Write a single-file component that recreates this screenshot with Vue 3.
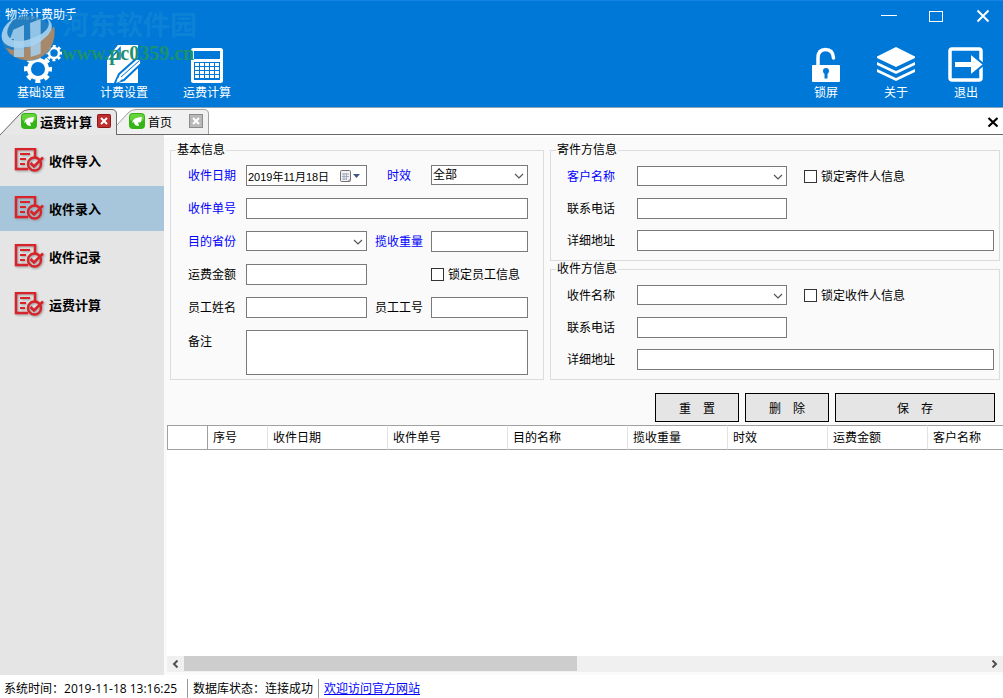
<script setup>
import { ref } from 'vue'

const navItems = ['收件导入', '收件录入', '收件记录', '运费计算']
const activeNav = ref(1)

const columns = [
  { name: '', width: 40 },
  { name: '序号', width: 60 },
  { name: '收件日期', width: 120 },
  { name: '收件单号', width: 120 },
  { name: '目的名称', width: 120 },
  { name: '揽收重量', width: 100 },
  { name: '时效', width: 100 },
  { name: '运费金额', width: 100 },
  { name: '客户名称', width: 120 },
]

const parties = [
  { id: 'sender', legend: '寄件方信息', name: '客户名称', required: true, lock: '锁定寄件人信息' },
  { id: 'receiver', legend: '收件方信息', name: '收件名称', required: false, lock: '锁定收件人信息' },
]

const keyCols = [4, 9, 14, 19, 24]
const keyRows = [15, 19, 23, 27]
</script>

<template>
  <div class="window">
    <header class="header">
      <div class="titlebar">
        <h1 class="title">物流计费助手</h1>
        <div class="controls">
          <button type="button" aria-label="最小化">
            <svg width="16" height="16" viewBox="0 0 16 16"><path d="M0 7.5H16" stroke="#fff" /></svg>
          </button>
          <button type="button" aria-label="最大化">
            <svg width="16" height="16" viewBox="0 0 16 16"><rect x="1.5" y="3.5" width="13" height="10" fill="none" stroke="#fff" /></svg>
          </button>
          <button type="button" aria-label="关闭">
            <svg width="16" height="16" viewBox="0 0 16 16"><path d="M2.500 2.500L13.500 13.500M13.500 2.500L2.500 13.500" stroke="#fff" stroke-width="2" /></svg>
          </button>
        </div>
      </div>

      <nav class="toolbar">
        <button type="button" class="tool">
          <svg width="42" height="38" viewBox="0 0 42 38" fill="none" stroke="#fff">
            <circle cx="18" cy="24" r="9" stroke-width="4" />
            <circle cx="18" cy="24" r="12" stroke-width="4" stroke-dasharray="5 4.425" stroke-dashoffset="2.500" />
            <circle cx="34" cy="8" r="5" stroke-width="2.500" />
            <circle cx="34" cy="8" r="7" stroke-width="2.500" stroke-dasharray="3 2.498" stroke-dashoffset="1.500" />
          </svg>
          <span>基础设置</span>
        </button>
        <button type="button" class="tool">
          <svg width="34" height="38" viewBox="0 0 34 38">
            <path d="M11 0H31V38H0V14Z" fill="#fff" />
            <path d="M3 14L13 3V14Z" fill="#fff" stroke="#0078d7" stroke-width="1.500" />
            <path d="M8 38L12 29L29 14Q35 13 34 19L17 35Z" fill="#fff" stroke="#0078d7" stroke-width="2" />
            <path d="M14 32L32 16" stroke="#0078d7" stroke-width="1" />
            <path d="M9 38L11 33L14 36Z" fill="#fff" />
          </svg>
          <span>计费设置</span>
        </button>
        <button type="button" class="tool">
          <svg width="32" height="38" viewBox="0 -3 32 38">
            <rect x="1.500" y="1.500" width="29" height="32" rx="1" fill="none" stroke="#fff" stroke-width="3" />
            <path d="M3 12.500H29" stroke="#fff" stroke-width="3" />
            <template v-for="y in keyRows" :key="y">
              <rect v-for="x in keyCols" :key="x" :x="x" :y="y" width="4" height="3" fill="#fff" />
            </template>
          </svg>
          <span>运费计算</span>
        </button>
        <div class="tool-spacer"></div>
        <button type="button" class="tool small">
          <svg width="30" height="38" viewBox="0 0 30 38">
            <path d="M7 21V13Q7 4.500 14.500 4.500Q22 4.500 22.500 13" fill="none" stroke="#fff" stroke-width="3.500" stroke-linecap="round" />
            <rect x="1" y="20" width="28" height="17" rx="1" fill="#fff" />
            <circle cx="15" cy="26" r="3" fill="#0078d7" />
            <path d="M13.500 27H16.500V33.500H13.500Z" fill="#0078d7" />
          </svg>
          <span>锁屏</span>
        </button>
        <button type="button" class="tool small">
          <svg width="38" height="38" viewBox="0 0 38 38" fill="#fff">
            <path d="M19 2L38 11.500V13L19 22L0 13V11.500Z" />
            <path d="M0 17L19 26L38 17V20L19 29L0 20Z" />
            <path d="M0 24L19 33L38 24V27L19 36L0 27Z" />
          </svg>
          <span>关于</span>
        </button>
        <button type="button" class="tool small">
          <svg width="36" height="38" viewBox="0 0 36 38">
            <rect x="2" y="4" width="31" height="31" rx="2" fill="none" stroke="#fff" stroke-width="3.500" />
            <path d="M6 16H22V8L36 19.500L22 31V23H6Z" fill="#fff" stroke="#0078d7" stroke-width="2" />
          </svg>
          <span>退出</span>
        </button>
      </nav>

      <div class="watermark" aria-hidden="true">
        <svg width="58" height="52" viewBox="0 0 174 156">
          <ellipse cx="84" cy="76" rx="78" ry="68" fill="#2f7fb5" opacity=".75" />
          <path d="M18 104Q80 132 163 40Q170 92 132 126Q90 156 42 130Q26 120 18 104Z" fill="#b58a62" opacity=".9" />
          <path d="M40 50L72 36V132H42V78H30ZM90 30L122 18V122L92 132Z" fill="#a5d0ee" opacity=".85" />
          <path d="M134 10Q174 36 140 70Q96 116 34 102Q-8 88 10 48Q20 28 48 12Q14 46 24 68Q38 92 84 80Q142 62 146 36Q148 22 134 10Z" fill="#a9d3f0" opacity=".9" />
        </svg>
        <div class="mark-text">
          <span class="mark-name">河东软件园</span>
          <span class="mark-url">www.pc0359.cn</span>
        </div>
      </div>
    </header>

    <div class="tabs">
      <div class="tab active">
        <svg class="tab-shape" width="117" height="26" viewBox="0 0 117 26">
          <path d="M0 26L20 5Q24 .5 29 .5H112Q116.500 .5 116.500 5V26" fill="#e8e8e8" stroke="#696969" />
        </svg>
        <svg class="leaf" width="16" height="16" viewBox="0 0 16 16">
          <rect width="16" height="16" rx="4" fill="#35b418" /><rect x="1" y="1" width="14" height="7" rx="3" fill="#67d33c" />
          <path d="M3 10Q4 4 13 4L12 9Q10 10 9 9L10 13Q5 13 5 9Z" fill="#fff" />
        </svg>
        <button type="button" class="tab-name">运费计算</button>
        <button type="button" class="tab-close" aria-label="关闭运费计算">
          <svg width="14" height="14" viewBox="0 0 14 14"><rect x=".5" y=".5" width="13" height="13" rx="1" fill="#c02f2f" stroke="#8d1717" /><path d="M4 4L10 10M10 4L4 10" stroke="#fff" stroke-width="2" /></svg>
        </button>
      </div>
      <div class="tab">
        <svg class="tab-shape" width="92" height="26" viewBox="0 0 92 26">
          <path d="M0 16L11 4Q14 .5 19 .5H87Q91.500 .5 91.500 5V25H0Z" fill="#f1f1f1" />
          <path d="M0 16L11 4Q14 .5 19 .5H87Q91.500 .5 91.500 5V25" fill="none" stroke="#a0a0a0" />
        </svg>
        <svg class="leaf" width="16" height="16" viewBox="0 0 16 16">
          <rect width="16" height="16" rx="4" fill="#35b418" /><rect x="1" y="1" width="14" height="7" rx="3" fill="#67d33c" />
          <path d="M3 10Q4 4 13 4L12 9Q10 10 9 9L10 13Q5 13 5 9Z" fill="#fff" />
        </svg>
        <button type="button" class="tab-name">首页</button>
        <button type="button" class="tab-close" aria-label="关闭首页">
          <svg width="14" height="14" viewBox="0 0 14 14"><rect x=".5" y=".5" width="13" height="13" fill="#b8b8b8" stroke="#8c8c8c" /><path d="M4 4L10 10M10 4L4 10" stroke="#fff" stroke-width="2" /></svg>
        </button>
      </div>
      <button type="button" class="close-all" aria-label="关闭标签">
        <svg width="12" height="12" viewBox="0 0 12 12"><path d="M1.500 2L10.500 10.500M10.500 2L1.500 10.500" stroke="#000" stroke-width="2.200" /></svg>
      </button>
    </div>

    <div class="body">
      <nav class="sidebar">
        <button v-for="(item, i) in navItems" :key="item" type="button" class="nav-item" :class="{ current: i === activeNav }" @click="activeNav = i">
          <svg class="nav-icon" width="31" height="26" viewBox="0 1 31 26" fill="none" stroke="#d8232a">
            <path d="M21 11V2H2V22H14" stroke-width="2.500" />
            <path d="M6 7H16M6 12H12M6 17H11" stroke-width="2" />
            <circle cx="20.500" cy="17" r="6.500" stroke-width="2.400" />
            <path d="M16.500 16L20 19.500L29 10.500" stroke-width="2.600" />
          </svg>
          <span>{{ item }}</span>
        </button>
      </nav>

      <main class="main">
        <form class="form" @submit.prevent>
          <div class="groups">
            <fieldset class="basic">
              <legend>基本信息</legend>
              <div class="basic-grid">
                <label class="req" for="date">收件日期</label>
                <div class="field date">
                  <input id="date" type="text" value="2019年11月18日">
                  <button type="button" aria-label="选择日期">
                    <svg width="22" height="14" viewBox="0 0 22 14">
                      <rect x=".5" y="1.500" width="10" height="11" rx="1" fill="#eef0f4" stroke="#77716f" />
                      <path d="M2 5H9M2 7.500H9M2 10H7M4 4V11M6.500 4V11" stroke="#a4acbd" />
                      <path d="M8 12.500L10.500 10" stroke="#77716f" />
                      <path d="M13 5H20L16.500 9Z" fill="#3f5786" />
                    </svg>
                  </button>
                </div>
                <label class="req mid" for="speed">时效</label>
                <div class="field select">
                  <select id="speed"><option>全部</option></select>
                  <svg width="10" height="6" viewBox="0 0 10 6"><path d="M1 1L5 5L9 1" fill="none" stroke="#555" stroke-width="1.200" /></svg>
                </div>

                <label class="req" for="number">收件单号</label>
                <input id="number" class="box span3" type="text">

                <label class="req" for="province">目的省份</label>
                <div class="field select">
                  <select id="province"><option></option></select>
                  <svg width="10" height="6" viewBox="0 0 10 6"><path d="M1 1L5 5L9 1" fill="none" stroke="#555" stroke-width="1.200" /></svg>
                </div>
                <label class="req mid" for="weight">揽收重量</label>
                <input id="weight" class="box" type="text">

                <label for="amount">运费金额</label>
                <input id="amount" class="box" type="text">
                <label class="check staff"><input type="checkbox"><span>锁定员工信息</span></label>

                <label for="staff-name">员工姓名</label>
                <input id="staff-name" class="box" type="text">
                <label class="mid" for="staff-id">员工工号</label>
                <input id="staff-id" class="box" type="text">

                <label for="remark">备注</label>
                <textarea id="remark" class="box span3"></textarea>
              </div>
            </fieldset>

            <div class="parties">
              <fieldset v-for="p in parties" :key="p.id">
                <legend>{{ p.legend }}</legend>
                <div class="party-grid">
                  <label :class="{ req: p.required }" :for="p.id + '-name'">{{ p.name }}</label>
                  <div class="field select">
                    <select :id="p.id + '-name'"><option></option></select>
                    <svg width="10" height="6" viewBox="0 0 10 6"><path d="M1 1L5 5L9 1" fill="none" stroke="#555" stroke-width="1.200" /></svg>
                  </div>
                  <label class="check"><input type="checkbox"><span>{{ p.lock }}</span></label>

                  <label :for="p.id + '-phone'">联系电话</label>
                  <input :id="p.id + '-phone'" class="box" type="text">
                  <span></span>

                  <label :for="p.id + '-address'">详细地址</label>
                  <input :id="p.id + '-address'" class="box span2" type="text">
                </div>
              </fieldset>
            </div>
          </div>

          <div class="actions">
            <button type="reset">重　置</button>
            <button type="button">删　除</button>
            <button type="submit" class="wide">保　存</button>
          </div>
        </form>

        <section class="grid">
          <div class="table-view">
            <table>
              <colgroup>
                <col v-for="c in columns" :key="c.name" :style="{ width: c.width + 'px' }">
              </colgroup>
              <thead>
                <tr><th v-for="c in columns" :key="c.name" scope="col">{{ c.name }}</th></tr>
              </thead>
            </table>
          </div>
          <div class="scrollbar">
            <button type="button" aria-label="向左滚动">
              <svg width="7" height="8" viewBox="0 0 7 8"><path d="M5.500 .5L2 4L5.500 7.500" fill="none" stroke="#505050" stroke-width="2" /></svg>
            </button>
            <div class="track"><div class="thumb"></div></div>
            <button type="button" aria-label="向右滚动">
              <svg width="7" height="8" viewBox="0 0 7 8"><path d="M1.500 .5L5 4L1.500 7.500" fill="none" stroke="#505050" stroke-width="2" /></svg>
            </button>
          </div>
        </section>
      </main>
    </div>

    <footer class="status">
      <span class="cell time">系统时间：<span class="clock">2019-11-18 13:16:25</span></span>
      <span class="cell">数据库状态：连接成功</span>
      <a href="#">欢迎访问官方网站</a>
    </footer>
  </div>
</template>

<style>
body {
  margin: 0;
  background: #fff;
}
</style>

<style scoped>
.window,
.window button,
.window input,
.window select,
.window textarea {
  font-family: "Liberation Sans", "Noto Sans CJK SC", sans-serif;
  font-size: 12px;
  color: #000;
}

.window {
  display: flex;
  flex-direction: column;
  height: 100vh;
  line-height: 16px;
  overflow: hidden;
}

.window *,
.window *::before {
  box-sizing: border-box;
}

button {
  margin: 0;
  padding: 0;
  border: 0;
  background: none;
}

svg {
  display: block;
  flex: none;
}

/* header */
.header {
  position: relative;
  height: 108px;
  flex: none;
  background: #0078d7;
  border-top: 1px solid #1883e6;
  border-bottom: 1px solid #8ba3b8;
}

.titlebar {
  display: flex;
  justify-content: space-between;
  height: 44px;
  padding: 5px 12px 0 5px;
}

.title {
  margin: 0;
  font-size: 12px;
  font-weight: 400;
  line-height: 18px;
  color: #fff;
}

.controls {
  display: flex;
  align-items: flex-start;
  gap: 31px;
  padding-top: 2px;
}

.toolbar {
  display: flex;
  gap: 35px;
  padding: 0 17px;
}

.window .tool {
  display: flex;
  flex-direction: column;
  align-items: center;
  width: 48px;
  color: #fff;
}

.window .tool span {
  line-height: 20px;
}

.tool.small {
  width: 40px;
  margin-left: -5px;
}

.tool-spacer {
  flex: 1;
}

.watermark {
  position: absolute;
  top: 12px;
  left: 0;
  display: flex;
  gap: 4px;
  pointer-events: none;
}

.mark-text {
  display: flex;
  flex-direction: column;
}

.mark-name {
  font-size: 27px;
  font-weight: 700;
  line-height: 26px;
  color: #0c82d6;
}

.mark-url {
  font-family: "Liberation Serif", serif;
  font-size: 20px;
  font-weight: 700;
  line-height: 28px;
  color: #1c9170;
}

/* tabs */
.tabs {
  display: flex;
  flex: none;
  height: 27px;
  padding-top: 1px;
  background: linear-gradient(#696969, #696969) 116px 100% / 100% 1px no-repeat #fff;
}

.tab {
  position: relative;
  display: flex;
  align-items: center;
  width: 92px;
  padding: 0 6px 2px 12px;
}

.tab.active {
  width: 117px;
  padding: 0 6px 2px 21px;
}

.tab-shape {
  position: absolute;
  inset: 0 auto auto 0;
}

.leaf,
.tab-name,
.tab-close {
  position: relative;
}

.tab-name {
  margin-left: 3px;
}

.window .tab.active .tab-name {
  font-size: 13px;
  font-weight: 700;
}

.tab-close {
  margin-left: auto;
}

.close-all {
  margin-left: auto;
  padding: 0 4px;
}

/* body */
.body {
  display: flex;
  flex: 1;
  min-height: 0;
}

.sidebar {
  display: flex;
  flex-direction: column;
  gap: 3px;
  flex: none;
  width: 164px;
  padding-top: 3px;
  background: #e5e5e5;
}

.window .nav-item {
  display: flex;
  align-items: center;
  gap: 4px;
  height: 45px;
  padding-left: 14px;
  font-size: 13px;
  font-weight: 700;
}

.nav-item.current {
  background: #a7c5db;
}

.nav-icon {
  filter: drop-shadow(1px 1px 1px #999);
}

.main {
  display: flex;
  flex: 1;
  flex-direction: column;
  min-width: 0;
  padding: 6px 0 3px 3px;
  border-top: 2px solid #fff;
  background: #fafafa;
}

.groups {
  display: grid;
  grid-template-columns: 374px minmax(0, 1fr);
  gap: 6px;
  padding: 0 3px;
}

fieldset {
  min-width: 0;
  margin: 0;
  padding: 0 5px;
  border: 1px solid #dcdcdc;
}

legend {
  padding: 0 1px;
  line-height: 14px;
}

.parties {
  display: flex;
  flex-direction: column;
  gap: 1px;
}

.basic-grid,
.party-grid {
  display: grid;
  align-items: center;
}

.basic-grid {
  grid-template-columns: 58px minmax(0, 121fr) 64px minmax(0, 97fr);
  grid-template-rows: repeat(5, 21px) 45px;
  row-gap: 12px;
  padding: 8px 10px 3px 12px;
}

.party-grid {
  grid-template-columns: 70px 150px minmax(0, 1fr);
  grid-auto-rows: 21px;
  row-gap: 11px;
  padding: 9px 0 9px 11px;
}

.req {
  color: #00f;
}

.mid {
  justify-self: center;
}

.span2 {
  grid-column: span 2;
}

.span3 {
  grid-column: span 3;
}

label[for="remark"] {
  align-self: start;
  padding-top: 4px;
}

.box,
.field {
  width: 100%;
  height: 21px;
  margin: 0;
  border: 1px solid #7a7a7a;
  border-radius: 0;
  background: #fff;
}

textarea.box {
  height: 45px;
  resize: none;
}

.field {
  display: flex;
  align-items: center;
}

.field input,
.field select {
  flex: 1;
  min-width: 0;
  height: 100%;
  padding: 0 0 0 1px;
  border: 0;
  background: none;
  appearance: none;
}

.window .date input {
  font-size: 11px;
}

.date button {
  padding-right: 4px;
}

.select {
  position: relative;
  align-self: start;
  height: 20px;
}

.select svg {
  position: absolute;
  top: 7px;
  right: 3px;
  pointer-events: none;
}

.check {
  display: flex;
  align-items: center;
  gap: 4px;
  padding-left: 17px;
  white-space: nowrap;
}

.check.staff {
  grid-column: 4;
  padding-left: 0;
}

.check input {
  flex: none;
  width: 13px;
  height: 13px;
  margin: 0;
  border: 1px solid #333;
  background: #fff;
  appearance: none;
}

.actions {
  display: flex;
  justify-content: flex-end;
  gap: 6px;
  padding: 13px 8px 3px;
}

.actions button {
  width: 84px;
  height: 29px;
  border: 1px solid #000;
  background: #e5e5e5;
}

.actions .wide {
  width: 160px;
}

/* data grid */
.grid {
  display: flex;
  flex: 1;
  flex-direction: column;
  min-height: 0;
  background: #fff;
}

.table-view {
  flex: 1;
  min-height: 0;
  overflow: hidden;
}

table {
  width: 880px;
  table-layout: fixed;
  border-spacing: 0;
  border-left: 1px solid #a0a0a0;
}

th {
  height: 25px;
  padding: 0 5px;
  border-top: 1px solid #a0a0a0;
  border-right: 1px solid #e3e3e3;
  border-bottom: 1px solid #a0a0a0;
  font-weight: 400;
  text-align: left;
}

th:first-child {
  border-right-color: #a0a0a0;
}

.scrollbar {
  display: flex;
  flex: none;
  height: 16px;
  background: #f0f0f0;
}

.scrollbar button {
  display: grid;
  place-items: center;
  width: 17px;
}

.track {
  flex: 1;
}

.thumb {
  width: 49%;
  height: 15px;
  background: #cdcdcd;
}

/* status bar */
.status {
  display: flex;
  align-items: center;
  flex: none;
  height: 23px;
  padding: 4px 0 0 4px;
  background: #fff;
}

.cell {
  height: 20px;
  margin-right: 5px;
  padding-right: 5px;
  border-right: 1px solid #999;
  line-height: 20px;
}

.time {
  min-width: 184px;
}

.clock {
  font-family: "Open Sans", sans-serif;
}

.status a {
  color: #00f;
}
</style>
